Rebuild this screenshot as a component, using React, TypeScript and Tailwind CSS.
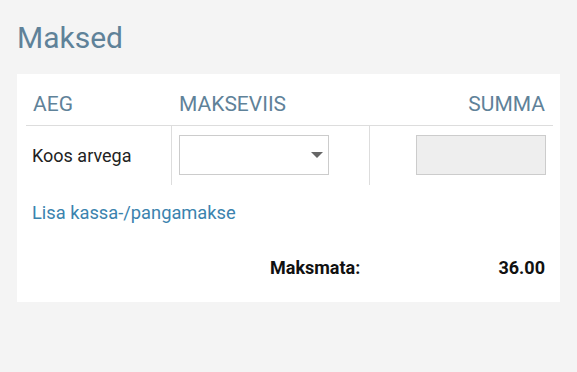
export default function App() {
  return (
    <div className="min-h-[372px] bg-[#f4f4f4] px-[17px] pt-[18px] pb-[70px] font-['Roboto',sans-serif]">
      <h1 className="text-[30px] leading-[40px] text-[#5f8299]">Maksed</h1>
      <div className="mt-[16px] w-[543px] bg-white pl-[9px] pr-[7px] pt-[16px] pb-[22px]">
        <table className="w-full border-collapse">
          <thead>
            <tr className="border-b border-[#dddddd] text-[21px] leading-[28px] text-[#5f8299]">
              <th className="w-[145px] px-[7px] pb-[7px] text-left font-normal">AEG</th>
              <th className="w-[198px] px-[8px] pb-[7px] text-left font-normal">MAKSEVIIS</th>
              <th className="px-[8px] pb-[7px] text-right font-normal">SUMMA</th>
            </tr>
          </thead>
          <tbody>
            <tr className="text-[18px] text-[#222222]">
              <td className="h-[59px] px-[6px] align-middle">Koos arvega</td>
              <td className="border-x border-[#dddddd] px-[7px] align-middle">
                <div className="flex h-[40px] w-[150px] items-center justify-end border border-[#cccccc] pr-[4px]">
                  <svg width="14" height="7" viewBox="0 0 14 7"><path d="M1 0h12L7 6z" fill="#666666" /></svg>
                </div>
              </td>
              <td className="px-[7px] align-middle">
                <div className="ml-auto h-[40px] w-[130px] border border-[#cccccc] bg-[#eeeeee]" />
              </td>
            </tr>
          </tbody>
        </table>
        <a href="#" className="mt-[16px] block px-[6px] text-[18.3px] leading-[24px] text-[#3b83ae]">Lisa kassa-/pangamakse</a>
        <div className="mt-[31px] flex items-center text-[18px] leading-[24px] font-bold text-[#111111]">
          <span className="ml-[244px] w-[160px]">Maksmata:</span>
          <span className="ml-auto pr-[8px]">36.00</span>
        </div>
      </div>
    </div>
  );
}
